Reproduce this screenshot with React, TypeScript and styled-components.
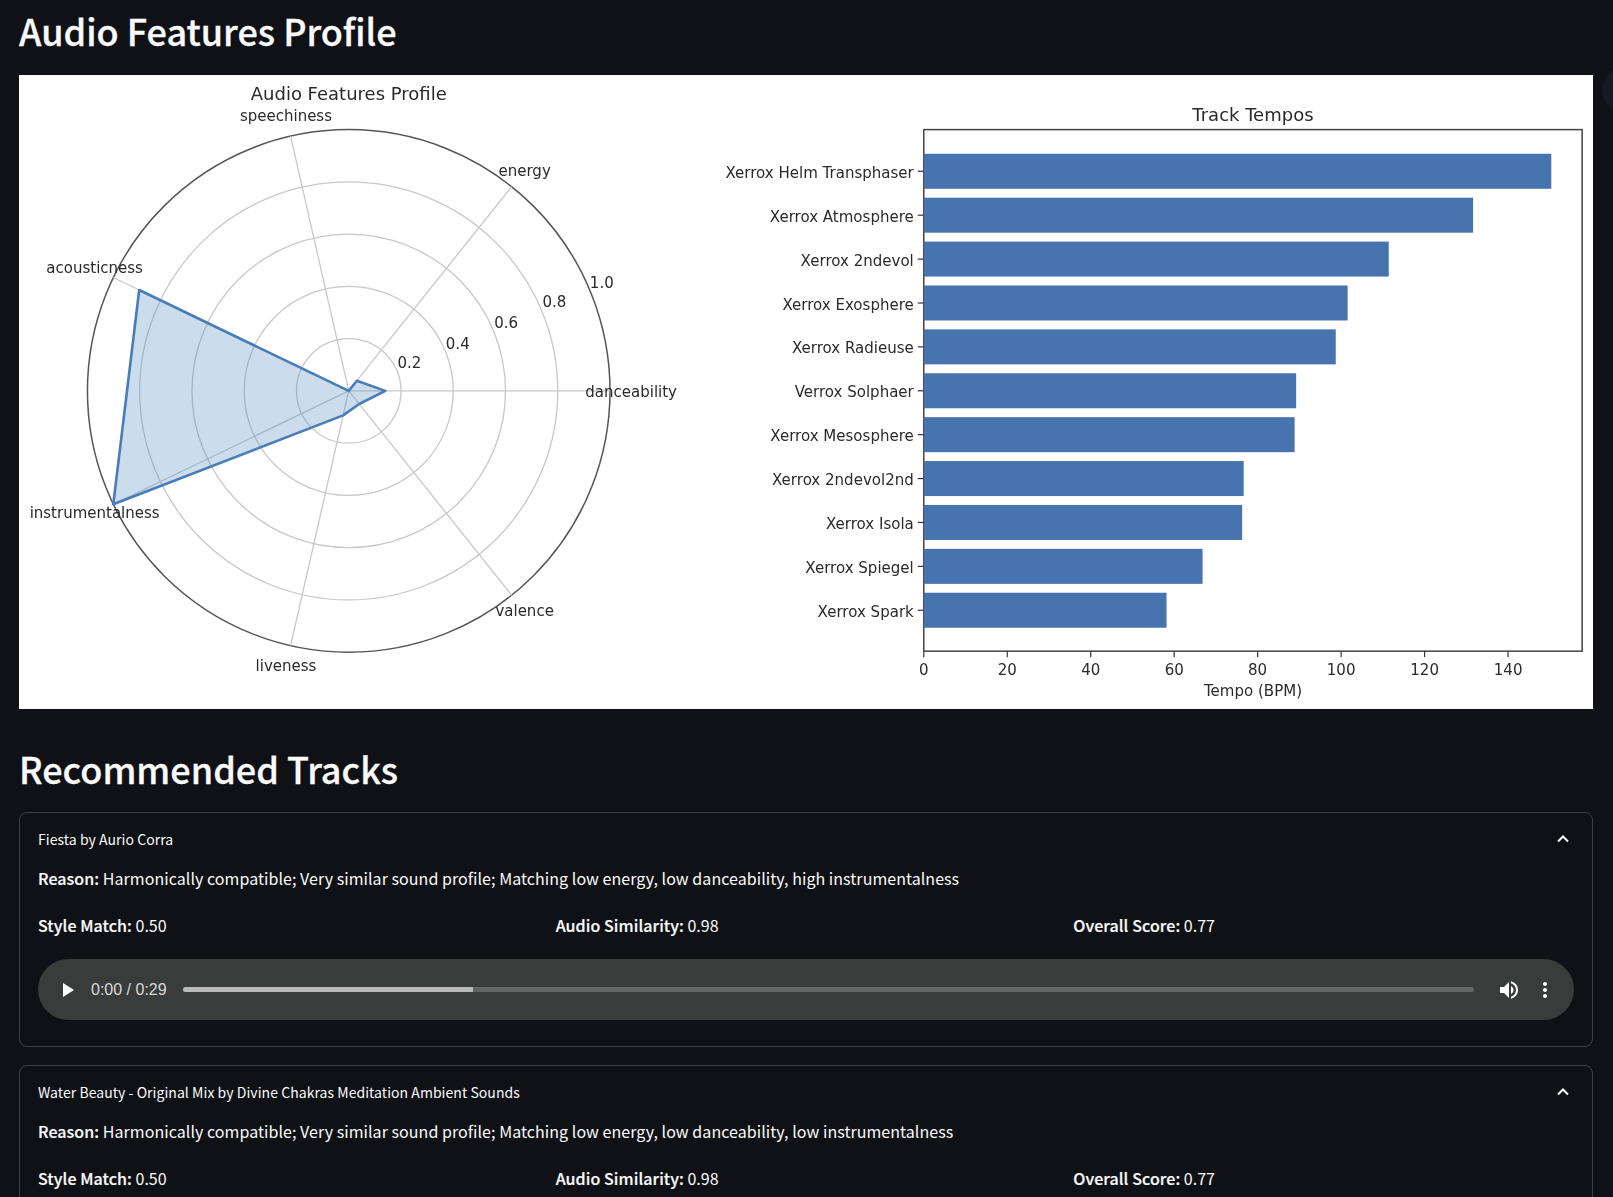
import React from "react";
import styled, { createGlobalStyle } from "styled-components";

const Global = createGlobalStyle`
  html, body { margin: 0; padding: 0; height: 100%; overflow: hidden; background: #0f1116; }
  #root { height: 100%; }
`;

const Page = styled.main`
  position: relative;
  box-sizing: border-box;
  height: 1197px;
  overflow: hidden;
  padding: 0 20px 0 19px;
  background: #0f1116;
  color: #fafafa;
  font-family: "Noto Sans CJK SC", "Noto Sans", sans-serif;
  font-size: 16px;
`;

const Heading = styled.h2`
  margin: 0;
  height: 66px;
  padding-top: 6px;
  box-sizing: border-box;
  font-size: 36px;
  font-weight: 500;
  line-height: 48px;
  letter-spacing: 0;
  -webkit-text-stroke: 0.3px #fafafa;
`;

const SecondHeading = styled(Heading)`
  height: auto;
  padding: 0;
  margin: 35px 0 20px;
`;

const Figure = styled.div`
  height: 634px;
  margin-top: 9px;
  background: #fff;
  overflow: hidden;
`;

const FigureSvg = styled.svg`
  display: block;
  width: 100%;
  height: 100%;
  font-family: "DejaVu Sans", sans-serif;
  font-size: 15px;
  fill: #2a2a2a;
  filter: blur(0.45px);
`;

const ScrollBubble = styled.div`
  position: absolute;
  top: 67px;
  right: -35px;
  width: 46px;
  height: 46px;
  border-radius: 50%;
  background: #161922;
`;

const Card = styled.section`
  box-sizing: border-box;
  border: 1px solid rgba(250, 250, 250, 0.2);
  border-radius: 8px;
  padding: 0 18px 26px;
  margin-bottom: 18px;
`;

const CardHeader = styled.header`
  display: flex;
  align-items: center;
  justify-content: space-between;
  height: 52px;
  font-size: 14px;
  letter-spacing: 0.05px;
`;

const Chevron = styled.svg`
  width: 16px;
  height: 16px;
  margin-right: 3px;
  fill: none;
  stroke: #fafafa;
  stroke-width: 2;
`;

const Reason = styled.p`
  margin: -1px 0 0;
  line-height: 28px;
  letter-spacing: 0.05px;
`;

const Strong = styled.strong`
  font-weight: 500;
  letter-spacing: 0.08px;
  -webkit-text-stroke: 0.2px #fafafa;
`;

const Metrics = styled.div`
  display: grid;
  grid-template-columns: repeat(3, 1fr);
  gap: 17px;
  margin: 19px 0 20px;
  line-height: 28px;
`;

const Player = styled.div`
  display: flex;
  align-items: center;
  height: 61px;
  border-radius: 31px;
  background: #3a3c3b;
  padding: 0 17px;
  color: #fff;
  font-family: "Liberation Sans", Arial, sans-serif;
  font-size: 16px;
`;

const PlayerIcon = styled.svg`
  flex: none;
  width: 24px;
  height: 24px;
  fill: #fff;
`;

const TimeLabel = styled.span`
  flex: none;
  margin: 0 16px 0 12px;
  color: #d8d8d8;
`;

const Track = styled.div`
  flex: 1;
  height: 5px;
  border-radius: 3px;
  background: #636564;
  overflow: hidden;
`;

const TrackFill = styled.div`
  height: 100%;
  background: #b8b9b8;
`;

const VolumeIcon = styled(PlayerIcon)`
  margin-left: 23px;
`;

const MenuIcon = styled(PlayerIcon)`
  margin-left: 12px;
`;

const sx = (v: number) => v * 1.0287 - 19;
const sy = (v: number) => v * 1.0287 - 75;

const CX = sx(339);
const CY = sy(380);
const R = 254 * 1.0287;

const features = [
  { name: "danceability", v: 0.14, x: 569, y: 380, anchor: "start" },
  { name: "energy", v: 0.05, x: 510, y: 165, anchor: "middle" },
  { name: "speechiness", v: 0.0, x: 278, y: 112, anchor: "middle" },
  { name: "acousticness", v: 0.89, x: 92, y: 260, anchor: "middle" },
  { name: "instrumentalness", v: 1.0, x: 92, y: 498, anchor: "middle" },
  { name: "liveness", v: 0.096, x: 278, y: 646, anchor: "middle" },
  { name: "valence", v: 0.064, x: 510, y: 593, anchor: "middle" },
];

const polar = (i: number, r: number) => {
  const a = (i * 2 * Math.PI) / features.length;
  return [CX + Math.cos(a) * R * r, CY - Math.sin(a) * R * r];
};

const polygon = features.map((f, i) => polar(i, f.v).map((n) => n.toFixed(1)).join(",")).join(" ");

const rings = [
  { r: 0.2, x: 398, y: 352 },
  { r: 0.4, x: 445, y: 333 },
  { r: 0.6, x: 492, y: 313 },
  { r: 0.8, x: 539, y: 293 },
  { r: 1.0, x: 585, y: 274 },
];

const bars = [
  { name: "Xerrox Helm Transphaser", right: 1508 },
  { name: "Xerrox Atmosphere", right: 1432 },
  { name: "Xerrox 2ndevol", right: 1350 },
  { name: "Xerrox Exosphere", right: 1310 },
  { name: "Xerrox Radieuse", right: 1298.5 },
  { name: "Verrox Solphaer", right: 1260 },
  { name: "Xerrox Mesosphere", right: 1258.5 },
  { name: "Xerrox 2ndevol2nd", right: 1209 },
  { name: "Xerrox Isola", right: 1207.5 },
  { name: "Xerrox Spiegel", right: 1169 },
  { name: "Xerrox Spark", right: 1134 },
];

const ticks = [0, 20, 40, 60, 80, 100, 120, 140];
const A0 = sx(898);
const A1 = sx(1538);
const AT = sy(126);
const AB = sy(633);
const unit = 4.057 * 1.0287;

/* The right plot of the source figure is squeezed sideways, so its text is narrow and tall. */
const squeezed = (x: number, y: number) => `translate(${x.toFixed(1)} ${y.toFixed(1)}) scale(0.94 1)`;

const Chart = () => (
  <FigureSvg viewBox="0 0 1574 634" preserveAspectRatio="none">
    <text x={sx(339)} y={sy(97)} textAnchor="middle" fontSize="18">Audio Features Profile</text>
    {rings.map((r) => (
      <circle key={r.r} cx={CX} cy={CY} r={R * r.r} fill="none" stroke={r.r === 1 ? "#555" : "#c8c8c8"} strokeWidth={r.r === 1 ? 1.5 : 1.3} />
    ))}
    {features.map((f, i) => {
      const [x, y] = polar(i, 1);
      return <line key={f.name} x1={CX} y1={CY} x2={x} y2={y} stroke="#c8c8c8" strokeWidth="1.3" />;
    })}
    <polygon points={polygon} fill="#4d85c0" fillOpacity="0.29" stroke="#4a7cb8" strokeWidth="2.6" strokeLinejoin="round" />
    {features.map((f) => (
      <text key={f.name} x={sx(f.x)} y={sy(f.y) + 6} textAnchor={f.anchor}>{f.name}</text>
    ))}
    {rings.map((r) => (
      <text key={r.r} x={sx(r.x)} y={sy(r.y) + 6} textAnchor="middle">{r.r.toFixed(1)}</text>
    ))}

    <text x={sx(1218)} y={sy(118)} textAnchor="middle" fontSize="18">Track Tempos</text>
    <rect x={A0} y={AT} width={A1 - A0} height={AB - AT} fill="none" stroke="#444" strokeWidth="1.5" />
    {bars.map((b, i) => {
      const top = sy(149.5 + i * 42.67);
      const mid = top + 17.5;
      return (
        <g key={b.name}>
          <rect x={A0} y={top} width={sx(b.right) - A0} height={35} fill="#4774ae" />
          <line x1={A0 - 6} x2={A0} y1={mid} y2={mid} stroke="#333" strokeWidth="1.2" />
          <text transform={squeezed(A0 - 10, mid + 6.5)} fontSize="16" textAnchor="end">{b.name}</text>
        </g>
      );
    })}
    {ticks.map((t) => (
      <g key={t}>
        <line x1={A0 + t * unit} x2={A0 + t * unit} y1={AB} y2={AB + 6} stroke="#333" strokeWidth="1.2" />
        <text transform={squeezed(A0 + t * unit, sy(651) + 5.5)} fontSize="16" textAnchor="middle">{t}</text>
      </g>
    ))}
    <text transform={squeezed(sx(1218), sy(671) + 5.5)} fontSize="16" textAnchor="middle">Tempo (BPM)</text>
  </FigureSvg>
);

type Rec = { title: string; reason: string; audio: boolean };

const recs: Rec[] = [
  {
    title: "Fiesta by Aurio Corra",
    reason: "Harmonically compatible; Very similar sound profile; Matching low energy, low danceability, high instrumentalness",
    audio: true,
  },
  {
    title: "Water Beauty - Original Mix by Divine Chakras Meditation Ambient Sounds",
    reason: "Harmonically compatible; Very similar sound profile; Matching low energy, low danceability, low instrumentalness",
    audio: false,
  },
];

const AudioPlayer = () => (
  <Player>
    <PlayerIcon viewBox="0 0 24 24"><path d="M8 5v14l11-7z" /></PlayerIcon>
    <TimeLabel>0:00 / 0:29</TimeLabel>
    <Track><TrackFill style={{ width: `${(290 / 1290) * 100}%` }} /></Track>
    <VolumeIcon viewBox="0 0 24 24">
      <path d="M3 9v6h4l5 5V4L7 9H3zm13.5 3c0-1.77-1.02-3.29-2.5-4.03v8.05c1.48-.73 2.5-2.25 2.5-4.02zM14 3.23v2.06c2.89.86 5 3.54 5 6.71s-2.11 5.85-5 6.71v2.06c4.01-.91 7-4.49 7-8.77s-2.99-7.86-7-8.77z" />
    </VolumeIcon>
    <MenuIcon viewBox="0 0 24 24">
      <path d="M12 8c1.1 0 2-.9 2-2s-.9-2-2-2-2 .9-2 2 .9 2 2 2zm0 2c-1.1 0-2 .9-2 2s.9 2 2 2 2-.9 2-2-.9-2-2-2zm0 6c-1.1 0-2 .9-2 2s.9 2 2 2 2-.9 2-2-.9-2-2-2z" />
    </MenuIcon>
  </Player>
);

const RecCard = ({ rec }: { rec: Rec }) => (
  <Card>
    <CardHeader>
      <span>{rec.title}</span>
      <Chevron viewBox="0 0 16 16"><path d="M3 10.5 8 5.5l5 5" /></Chevron>
    </CardHeader>
    <Reason><Strong>Reason:</Strong> {rec.reason}</Reason>
    <Metrics>
      <div><Strong>Style Match:</Strong> 0.50</div>
      <div><Strong>Audio Similarity:</Strong> 0.98</div>
      <div><Strong>Overall Score:</Strong> 0.77</div>
    </Metrics>
    {rec.audio && <AudioPlayer />}
  </Card>
);

export default function App() {
  return (
    <Page>
      <Global />
      <Heading>Audio Features Profile</Heading>
      <Figure><Chart /></Figure>
      <SecondHeading>Recommended Tracks</SecondHeading>
      {recs.map((r) => <RecCard key={r.title} rec={r} />)}
      <ScrollBubble />
    </Page>
  );
}
